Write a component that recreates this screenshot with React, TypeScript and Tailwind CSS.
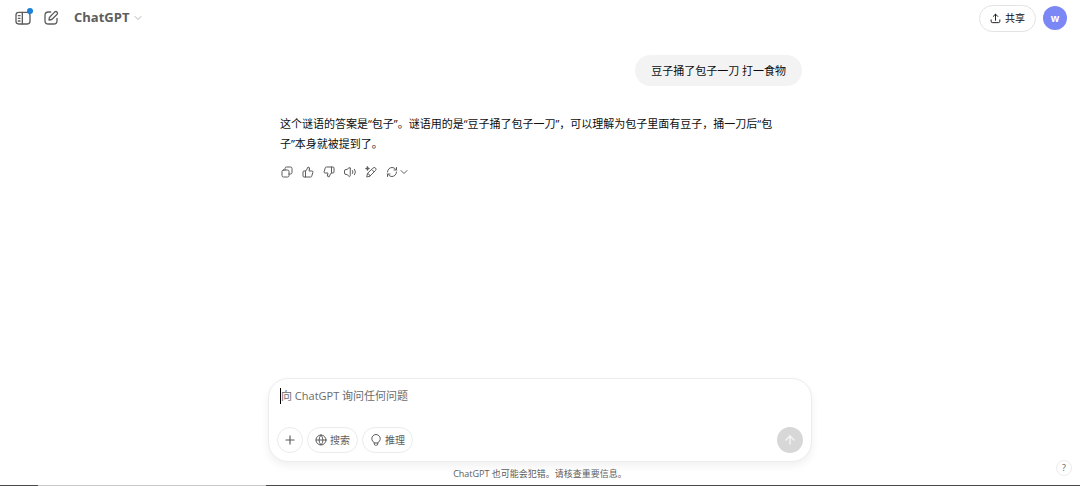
import type { ReactNode } from "react";
import { ArrowUp, ChevronDown, Globe, Plus, RefreshCw, ThumbsDown, ThumbsUp } from "lucide-react";

/* Line icons that lucide does not have in this shape */
function Glyph({ className, children }: { className: string; children: ReactNode }) {
  return (
    <svg
      viewBox="0 0 24 24"
      className={className}
      fill="none"
      stroke="currentColor"
      strokeWidth={2}
      strokeLinecap="round"
      strokeLinejoin="round"
      aria-hidden="true"
    >
      {children}
    </svg>
  );
}

function SidebarIcon() {
  return (
    <Glyph className="size-4">
      <rect x="1.5" y="3.5" width="21" height="17.5" rx="4" />
      <path d="M11 3.5V21M5 8.5h2.500M5 12.5h2.500M5 16.5h2.500" />
    </Glyph>
  );
}

function ComposeIcon() {
  return (
    <Glyph className="size-4">
      <path d="M11.500 3H8a5 5 0 0 0-5 5v8a5 5 0 0 0 5 5h8a5 5 0 0 0 5-5v-3.500" />
      <path d="M17.700 2.800a2.500 2.500 0 0 1 3.500 3.500l-7.200 7.200c-1 1-2.500 1.500-5 1.500 0-2.500.5-4 1.500-5z" />
    </Glyph>
  );
}

function CopyIcon() {
  return (
    <Glyph className="size-3">
      <rect x="2" y="8" width="14" height="14" rx="3" />
      <path d="M8 8V5a3 3 0 0 1 3-3h8a3 3 0 0 1 3 3v8a3 3 0 0 1-3 3h-3" />
    </Glyph>
  );
}

function SpeakerIcon() {
  return (
    <Glyph className="size-3">
      <path d="M12.500 4.500v15c0 1.300-1.300 2-2.300 1.200L6 17H4a3 3 0 0 1-3-3v-4a3 3 0 0 1 3-3h2l4.200-3.700c1-.8 2.300-.1 2.300 1.200z" />
      <path d="M17 9a5 5 0 0 1 0 6M21 6.500a9 9 0 0 1 0 11" />
    </Glyph>
  );
}

function CanvasIcon() {
  return (
    <Glyph className="size-3">
      <path d="M16 4a3.400 3.400 0 0 1 5 5L9.500 20.500 3.500 22l1.300-6.500zM13.500 7l4.500 4.500M4.800 15.500c2.500-.8 5 1.500 4.700 5" />
      <path d="M5 0.500l1.300 3.200L9.500 5 6.300 6.300 5 9.500 3.700 6.300.5 5l3.200-1.300z" fill="currentColor" strokeWidth="1" />
    </Glyph>
  );
}

function BulbIcon() {
  return (
    <Glyph className="size-3">
      <path d="M8.500 17.300a8.500 8.500 0 1 1 7 0V20a2.500 2.500 0 0 1-2.500 2.500h-2A2.500 2.500 0 0 1 8.500 20zM8.500 18h7" />
    </Glyph>
  );
}

function ShareIcon() {
  return (
    <Glyph className="size-[11px]">
      <path d="M12 16V3M7 7.500L12 2.500l5 5M2.500 15v3a3 3 0 0 0 3 3h13a3 3 0 0 0 3-3v-3" />
    </Glyph>
  );
}

const actions = [
  { label: "复制", icon: <CopyIcon /> },
  { label: "最佳回复", icon: <ThumbsUp className="size-3" /> },
  { label: "错误回复", icon: <ThumbsDown className="size-3" /> },
  { label: "朗读", icon: <SpeakerIcon /> },
  { label: "在画布中编辑", icon: <CanvasIcon /> },
];

function Header() {
  return (
    <header className="flex h-9 items-center justify-between pr-[13px] pl-[15px]">
      <div className="flex items-center text-[#5d5d5d]">
        <button aria-label="打开边栏" className="relative">
          <SidebarIcon />
          <span className="absolute -top-0.5 -right-0.5 size-1.5 rounded-full bg-[#1a80d8]" />
        </button>
        <button aria-label="新聊天" className="ml-3">
          <ComposeIcon />
        </button>
        <button className="ml-[15px] flex items-center gap-[3px] text-[13px] font-bold">
          ChatGPT
          <ChevronDown className="size-3 text-[#b4b4b4]" />
        </button>
      </div>
      <div className="flex items-center gap-[7px]">
        <button className="flex h-[27px] items-center gap-1 rounded-full border border-[#e3e3e3] px-[10px] text-[10px] text-[#0d0d0d]">
          <ShareIcon />
          共享
        </button>
        <button
          aria-label="账户"
          className="flex size-6 items-center justify-center rounded-full bg-[#7b87f5] text-[10px] font-bold text-white"
        >
          w
        </button>
      </div>
    </header>
  );
}

function Conversation() {
  return (
    <main className="mx-auto w-full max-w-[544px] flex-1 pt-[19px] pr-[10px] pl-3 text-[11px] leading-5 text-[#0d0d0d]">
      <div className="flex justify-end">
        <p className="flex h-[31px] items-center rounded-full bg-[#f3f3f3] px-4">豆子捅了包子一刀 打一食物</p>
      </div>
      <p className="mt-7">
        这个谜语的答案是“包子”。谜语用的是“豆子捅了包子一刀”，可以理解为包子里面有豆子，捅一刀后“包
        <br />
        子”本身就被提到了。
      </p>
      <div className="mt-3 flex items-center gap-[9px] pl-px text-[#5d5d5d]">
        {actions.map((a) => (
          <button key={a.label} aria-label={a.label}>
            {a.icon}
          </button>
        ))}
        <button aria-label="重试" className="flex items-center">
          <RefreshCw className="size-3" />
          <ChevronDown className="size-3" />
        </button>
      </div>
    </main>
  );
}

function Composer() {
  return (
    <form
      onSubmit={(e) => e.preventDefault()}
      className="mx-auto w-full max-w-[544px] rounded-[20px] border border-[#ececec] bg-white px-2 pt-[9px] pb-2 shadow-[0_4px_8px_rgba(0,0,0,0.06)]"
    >
      <div className="flex items-center px-[3px]">
        <span className="h-4 w-px bg-black" />
        <textarea
          aria-label="消息"
          rows={1}
          placeholder="向 ChatGPT 询问任何问题"
          className="h-4 flex-1 resize-none overflow-hidden text-[11px] leading-4 text-[#0d0d0d] outline-none placeholder:text-[#6b6b6b]"
        />
      </div>
      <div className="mt-[23px] flex items-center gap-1 text-[10px] text-[#5d5d5d]">
        <button type="button" aria-label="添加" className="flex size-[26px] items-center justify-center rounded-full border border-[#ebebeb]">
          <Plus className="size-[14px]" />
        </button>
        <button type="button" className="flex h-[26px] items-center gap-[3px] rounded-full border border-[#ebebeb] px-[7px]">
          <Globe className="size-3" />
          搜索
        </button>
        <button type="button" className="flex h-[26px] items-center gap-[3px] rounded-full border border-[#ebebeb] px-[7px]">
          <BulbIcon />
          推理
        </button>
        <button aria-label="发送" className="ml-auto flex size-[26px] items-center justify-center rounded-full bg-[#d7d7d7] text-[#f4f4f4]">
          <ArrowUp className="size-3.5" strokeWidth={2.5} />
        </button>
      </div>
    </form>
  );
}

export default function App() {
  return (
    <div lang="zh-CN" className="relative flex min-h-screen flex-col bg-white font-['Open_Sans','Noto_Sans_CJK_SC',sans-serif]">
      <Header />
      <Conversation />
      <Composer />
      <p className="py-1 text-center text-[9px] leading-[15px] text-[#5d5d5d]">ChatGPT 也可能会犯错。请核查重要信息。</p>
      <div className="flex h-px">
        <span className="w-[38px] bg-[#4a4a4a]" />
        <span className="w-[228px] bg-[#c8c8c8]" />
        <span className="flex-1 bg-[#4a4a4a]" />
      </div>
      <button
        aria-label="帮助"
        className="absolute right-2 bottom-2.5 flex size-4 items-center justify-center rounded-full border border-[#ececec] text-[9px] text-[#5d5d5d]"
      >
        ?
      </button>
    </div>
  );
}
